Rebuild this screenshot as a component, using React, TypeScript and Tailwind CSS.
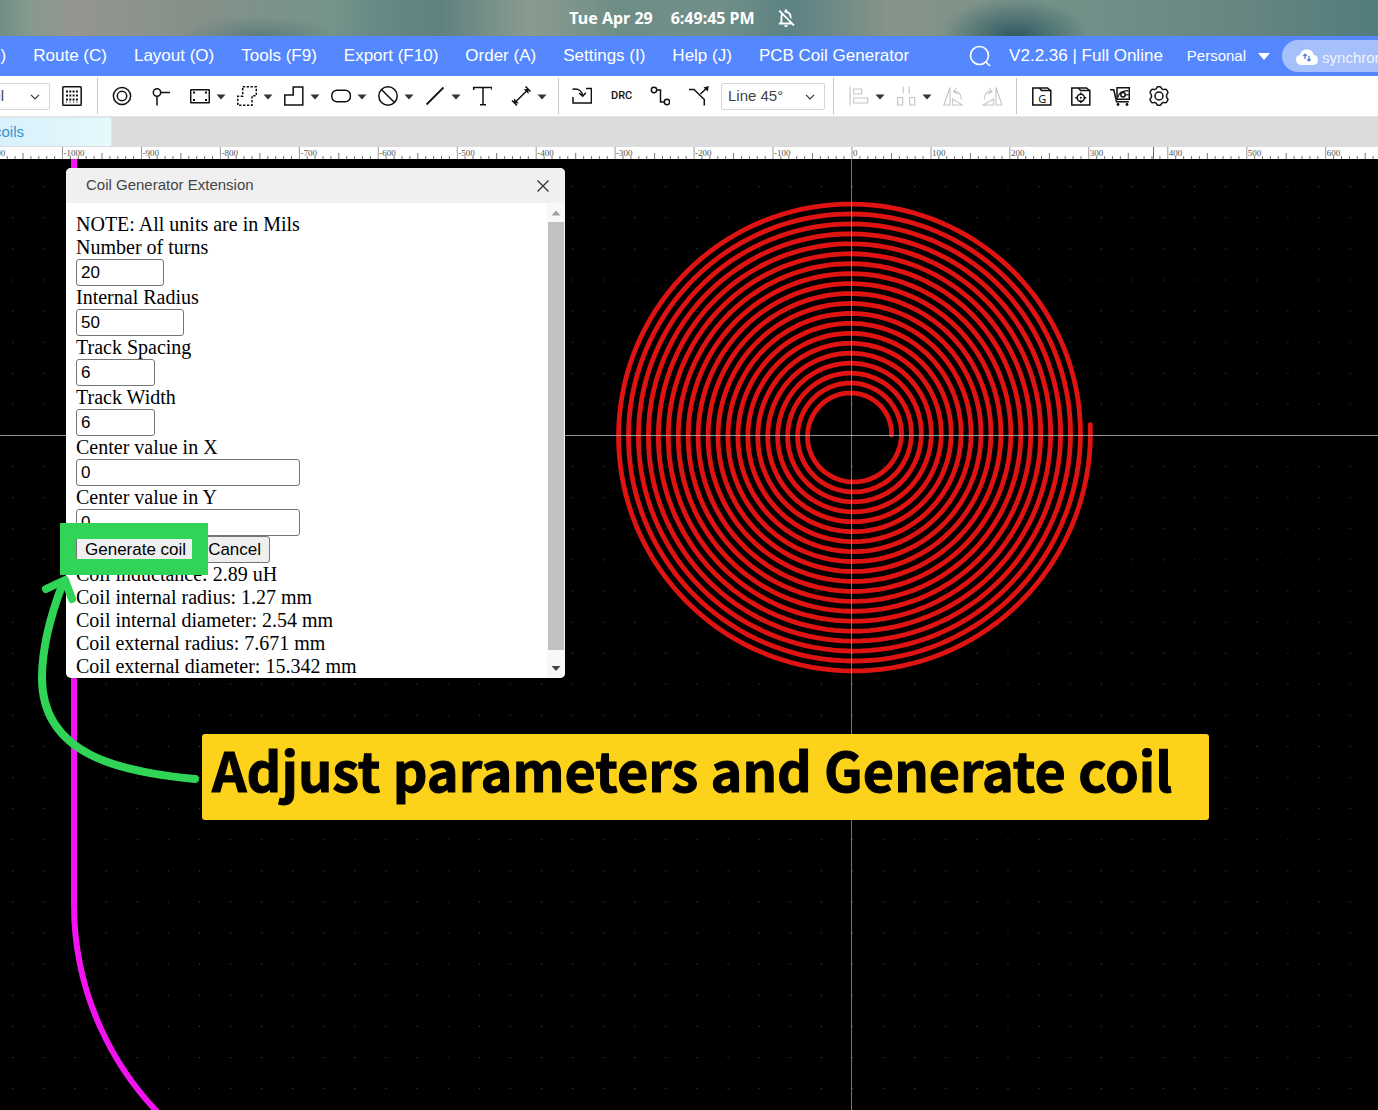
import { useState } from "react";
import type { ReactNode } from "react";
import { MdOutlineNotificationsOff } from "react-icons/md";

const MENUS = [
  "Design (D)",
  "Route (C)",
  "Layout (O)",
  "Tools (F9)",
  "Export (F10)",
  "Order (A)",
  "Settings (I)",
  "Help (J)",
  "PCB Coil Generator",
];

// canvas scale
const PX_PER_MIL = 0.7895;
const ORIGIN_X = 852;
const ORIGIN_Y = 276;
const GRID = 31.1;

const FIELDS = [
  { id: "turns", label: "Number of turns", value: "20", width: "w-[88px]" },
  { id: "radius", label: "Internal Radius", value: "50", width: "w-[108px]" },
  { id: "spacing", label: "Track Spacing", value: "6", width: "w-[79px]" },
  { id: "width", label: "Track Width", value: "6", width: "w-[79px]" },
  { id: "cx", label: "Center value in X", value: "0", width: "w-56" },
  { id: "cy", label: "Center value in Y", value: "0", width: "w-56" },
];

const RESULTS = [
  "Coil inductance: 2.89 uH",
  "Coil internal radius: 1.27 mm",
  "Coil internal diameter: 2.54 mm",
  "Coil external radius: 7.671 mm",
  "Coil external diameter: 15.342 mm",
];

// spiral track as a polyline, counter-clockwise from the inner radius
function coilPath(turns: number, innerMil: number, pitchMil: number) {
  const steps = 144;
  const total = turns * steps + 1;
  const points: string[] = [];
  for (let i = 0; i <= total; i++) {
    const angle = (i / steps) * Math.PI * 2;
    const r = (innerMil + (pitchMil * i) / steps) * PX_PER_MIL;
    points.push(
      `${(r * Math.cos(angle)).toFixed(2)},${(-r * Math.sin(angle)).toFixed(2)}`
    );
  }
  return `M${points.join("L")}`;
}

const COIL = coilPath(20, 50, 12.6);

function Icon({ children }: { children: ReactNode }) {
  return (
    <svg
      width="20"
      height="20"
      viewBox="0 0 20 20"
      fill="none"
      stroke="currentColor"
      strokeWidth="1.5"
      className="shrink-0"
    >
      {children}
    </svg>
  );
}

function Tool({
  name,
  caret,
  disabled,
  children,
}: {
  name: string;
  caret?: boolean;
  disabled?: boolean;
  children: ReactNode;
}) {
  return (
    <button
      type="button"
      aria-label={name}
      className={`flex h-8 shrink-0 items-center ${caret ? "w-[47px] gap-1.5" : "w-[39px]"}`}
    >
      <span className={disabled ? "text-[#c4c4c4]" : "text-[#111]"}>
        <Icon>{children}</Icon>
      </span>
      {caret && (
        <svg width="10" height="6" viewBox="0 0 10 6" className="mt-0.5 shrink-0">
          <path d="M0.5 0.5h9L5 5.5z" fill="#333" />
        </svg>
      )}
    </button>
  );
}

function Separator() {
  return <div className="h-9 w-px shrink-0 bg-[#c4c4c4]" />;
}

function Dropdown({
  label,
  value,
  className,
}: {
  label: string;
  value: string;
  className: string;
}) {
  return (
    <div className={`relative shrink-0 ${className}`}>
      <select
        aria-label={label}
        className="block h-[27px] w-full appearance-none rounded-xs border border-[#d6d6d6] bg-white pl-1.5 text-[15px] text-[#444]"
      >
        <option>{value}</option>
      </select>
      <svg
        width="10"
        height="6"
        viewBox="0 0 10 6"
        fill="none"
        stroke="#333"
        strokeWidth="1.2"
        className="pointer-events-none absolute right-2.5 top-[11px]"
      >
        <path d="M1 0.8l4 4 4-4" />
      </svg>
    </div>
  );
}

function StatusBar() {
  return (
    <div className="flex h-9 shrink-0 items-center justify-center bg-[radial-gradient(ellipse_75px_38px_at_1015px_36px,#2f5b62,transparent),radial-gradient(ellipse_80px_20px_at_260px_36px,#5f7d7e,transparent),linear-gradient(90deg,#6f8f88_0px,#87998d_30px,#959690_75px,#849089_200px,#76958a_330px,#668a86_375px,#5f8180_440px,#8b9b90_530px,#6d8e86_620px,#718f88_720px,#5c8284_790px,#879489_890px,#6f9088_1100px,#678681_1240px,#527c7d_1378px)] pr-3 font-['Noto_Sans',sans-serif] text-base font-bold text-white">
      <span>Tue Apr 29</span>
      <span className="ml-[18px]">6:49:45 PM</span>
      <MdOutlineNotificationsOff size={22} className="ml-5" />
    </div>
  );
}

function MenuBar() {
  return (
    <nav className="flex h-10 shrink-0 items-center overflow-hidden bg-[#5588ff] text-[17px] text-white">
      <div className="-ml-[75px] flex shrink-0 gap-[27px] whitespace-nowrap">
        {MENUS.map((menu) => (
          <button key={menu} type="button">
            {menu}
          </button>
        ))}
      </div>
      <button type="button" aria-label="Search" className="ml-[60px] shrink-0">
        <svg width="22" height="22" viewBox="0 0 22 22" fill="none" stroke="#fff" strokeWidth="1.6">
          <circle cx="10.5" cy="10.5" r="9" />
          <path d="M17 17l4 4" />
        </svg>
      </button>
      <span className="ml-[18px] shrink-0 whitespace-nowrap">V2.2.36 | Full Online</span>
      <button type="button" className="ml-6 flex shrink-0 items-center gap-3 text-[15px]">
        Personal
        <svg width="12" height="7" viewBox="0 0 12 7">
          <path d="M0 0h12L6 7z" fill="#fff" />
        </svg>
      </button>
      <button
        type="button"
        className="ml-3 flex h-8 shrink-0 items-center rounded-full bg-[#a6c0fb] px-3.5 text-[15px] text-[#f1f5ff]"
      >
        <svg width="22" height="17" viewBox="0 0 22 17" className="mr-1">
          <path
            d="M5.5 17a5.2 5.2 0 0 1-1.6-10.2A7.2 7.2 0 0 1 17.8 6.9 5.1 5.1 0 0 1 16.8 17z"
            fill="#fff"
          />
          <path
            d="M9 11V6.2M7.3 8L9 6.2 10.7 8M13 8v5M11.3 11.3L13 13l1.7-1.7"
            fill="none"
            stroke="#5580dd"
            strokeWidth="1.3"
          />
        </svg>
        <span className="pt-1">synchronized</span>
      </button>
    </nav>
  );
}

function Toolbar() {
  return (
    <div className="flex h-[41px] shrink-0 items-center overflow-hidden border-b border-[#e6e6e6] bg-white">
      <Dropdown label="Unit" value="mil" className="-ml-[22px] w-[72px]" />
      <button type="button" aria-label="Grid" className="ml-3 shrink-0 text-[#111]">
        <Icon>
          <rect x="0.8" y="0.8" width="18.4" height="18.4" rx="0.8" />
          <path
            d="M4 5.5h12M4 9.5h12M4 13.5h12"
            strokeDasharray="2 1.3"
            strokeWidth="1.8"
          />
          <path d="M4 16h12" strokeDasharray="1 2.5" strokeWidth="1" />
        </Icon>
      </button>
      <div className="w-[15px] shrink-0" />
      <Separator />

      <div className="ml-3.5 flex shrink-0">
        <Tool name="Pad">
          <circle cx="10" cy="10" r="8.6" />
          <circle cx="10" cy="10" r="4.7" />
        </Tool>
        <Tool name="Via">
          <circle cx="6" cy="6.5" r="3.7" />
          <path d="M9.7 6.5H19M6 10.2V19.5" />
        </Tool>
        <Tool name="Board outline" caret>
          <rect x="0.7" y="3.7" width="18.6" height="13" rx="0.5" />
          <path d="M3 6.5h2M15 6.5h2M3 14h2M15 14h2" strokeWidth="2" />
        </Tool>
        <Tool name="Region" caret>
          <path
            d="M5.7 0.8H19.3V9.8H15V19.2H0.8V10.2H5.7Z"
            strokeDasharray="2.4 1.5"
          />
        </Tool>
        <Tool name="Fill" caret>
          <path d="M9.2 1H18.8V19H0.8V9H9.2Z" />
        </Tool>
        <Tool name="Slot" caret>
          <rect x="0.8" y="4.3" width="18.6" height="11.4" rx="5.2" />
        </Tool>
        <Tool name="Keepout" caret>
          <circle cx="10" cy="10" r="9.2" />
          <path d="M3.5 3.5l13 13" />
        </Tool>
        <Tool name="Line" caret>
          <path d="M1.5 18.5L18.5 1.5" strokeWidth="1.8" />
        </Tool>
        <Tool name="Text">
          <path d="M1.7 4V1.5H20V4M11 1.5V18.8M8 18.8h6" />
        </Tool>
        <Tool name="Dimension" caret>
          <path d="M3 17.5L17.5 3M1 14.5l5 5M14.5 0.5l5 5" />
          <path d="M3 17.5v-5l4.8 4.8zM17.5 3v5l-4.8-4.8z" fill="currentColor" stroke="none" />
        </Tool>
      </div>
      <Separator />

      <div className="ml-[13px] flex shrink-0">
        <Tool name="Import changes">
          <path d="M14 2.5H20.2M19.4 2.5V17H1V11" />
          <path d="M0.5 3.2C6 2.5 10 5 10.8 9.5M7.2 7.2l3.6 3 3-3.5" />
        </Tool>
        <button
          type="button"
          className="h-8 w-[39px] shrink-0 text-left font-['Liberation_Sans_Narrow','Roboto',sans-serif] text-[11px] font-medium text-[#111]"
        >
          DRC
        </button>
        <Tool name="Route track">
          <circle cx="4" cy="4" r="2.7" />
          <circle cx="17" cy="16" r="2.7" />
          <path d="M6.7 4H10.5V16H14.3" />
        </Tool>
        <Tool name="Stretch track">
          <path d="M0 3.5H5L15.3 13.5V19.5M11.5 8L18 1.8" />
          <path d="M19.8 0l-1 5.4-4.3-4z" fill="currentColor" stroke="none" />
        </Tool>
      </div>
      <Dropdown label="Routing corner" value="Line 45°" className="-ml-[7px] w-[104px]" />
      <div className="w-2 shrink-0" />
      <Separator />

      <div className="ml-[15px] flex shrink-0">
        <Tool name="Align" caret disabled>
          <path d="M1 0.5v19M4.7 3h8v5h-8zM4.7 12h14v5h-14z" strokeWidth="1.1" />
        </Tool>
        <Tool name="Distribute" caret disabled>
          <path
            d="M7.2 0.5v7M13.3 0.5v7M1.7 11.5h5v7.5h-5zM13.7 11.5h5v7.5h-5z"
            strokeWidth="1.1"
          />
        </Tool>
        <Tool name="Flip horizontally" disabled>
          <path
            d="M7 1.5V19H0.8ZM9.5 13L19.5 19H9.5ZM11 5.5C15 4.5 18.5 8 18 13.5M13.5 2l-3 3.5 4 2.5"
            strokeWidth="1.1"
          />
        </Tool>
        <Tool name="Flip vertically" disabled>
          <path
            d="M14 1.5V19H20ZM11.5 13L1 19H11.5ZM9.5 5.5C5.5 4.5 2 8 2.5 13.5M7 2l3 3.5-4 2.5"
            strokeWidth="1.1"
          />
        </Tool>
      </div>
      <div className="-ml-[5px] shrink-0">
        <Separator />
      </div>

      <div className="ml-[15px] flex shrink-0">
        <Tool name="Export Gerber">
          <path d="M0.8 19V2H7.5L9.5 4.5H18.8V19Z" />
          <path d="M7.5 2H15.5L18.5 4.5" />
          <text
            x="6.2"
            y="16.6"
            fontSize="11"
            fontFamily="Noto Sans, sans-serif"
            fill="currentColor"
            stroke="none"
          >
            G
          </text>
        </Tool>
        <Tool name="Export pick and place">
          <path d="M0.8 19V2H7.5L9.5 4.5H18.8V19Z" />
          <path d="M7.5 2H15.5L18.5 4.5" />
          <circle cx="9.8" cy="11.8" r="3.6" />
          <path d="M9.8 6.5v2.5M9.8 14.6v2.5M4.3 11.8h2.5M12.8 11.8h2.5" />
          <circle cx="9.8" cy="11.8" r="1" fill="currentColor" stroke="none" />
        </Tool>
        <Tool name="Order PCB">
          <path d="M0 3.8H3.8L6.5 15.8H18.8" />
          <path d="M7 13.2V1.8H19.3V13.2H7" />
          <path d="M8 11.5C8.5 7 11.5 4.6 18.5 4.6" strokeWidth="1.2" />
          <circle cx="13" cy="8.8" r="2.2" />
          <path d="M15.2 8.8h3.6" strokeWidth="1.2" />
          <circle cx="8" cy="18.5" r="1.4" fill="currentColor" stroke="none" />
          <circle cx="17" cy="18.5" r="1.4" fill="currentColor" stroke="none" />
        </Tool>
        <Tool name="Settings">
          <circle cx="10" cy="10" r="4" />
          <path
            strokeLinejoin="round"
            d="M7.3 2.7Q8 0.7 9 0.7H11Q12 0.7 12.7 2.7Q14 3.9 15.6 3.4Q17 3 17.6 3.9L18.8 6Q19.3 6.9 18 8Q17 10 18 12Q19.3 13.1 18.8 14L17.6 16.1Q17 17 15.6 16.6Q14 16.1 12.7 17.3Q12 19.3 11 19.3H9Q8 19.3 7.3 17.3Q6 16.1 4.4 16.6Q3 17 2.4 16.1L1.2 14Q0.7 13.1 2 12Q3 10 2 8Q0.7 6.9 1.2 6L2.4 3.9Q3 3 4.4 3.4Q6 3.9 7.3 2.7Z"
          />
        </Tool>
      </div>
    </div>
  );
}

function TabBar() {
  return (
    <div className="flex h-[30px] shrink-0 bg-[#dcdcdc]">
      <button
        type="button"
        className="mb-px flex w-[112px] items-center border-r border-t border-[#d2e8ee] bg-linear-to-r from-[#d8f1fb] to-[#e6f9fc] text-[15px] text-[#3492d4]"
      >
        <span className="-ml-1.5">coils</span>
      </button>
    </div>
  );
}

function Ruler() {
  const ticks = [];
  for (let mil = -1080; mil <= 700; mil += 10) {
    const x = ORIGIN_X + mil * PX_PER_MIL;
    const height = mil % 100 === 0 ? 12 : mil % 50 === 0 ? 6 : 3;
    ticks.push(
      <path
        key={mil}
        d={`M${x.toFixed(1)} 12v${-height}`}
        stroke={mil % 100 === 0 ? "#999" : "#777"}
      />
    );
  }
  const labels = [];
  for (let mil = -1100; mil <= 700; mil += 100) {
    labels.push(
      <text key={mil} x={(ORIGIN_X + 1 + mil * PX_PER_MIL).toFixed(1)} y="9">
        {mil}
      </text>
    );
  }
  return (
    <div className="h-3 shrink-0 overflow-hidden bg-white">
      <svg className="h-3 w-full">
        {ticks}
        {/* pointer position */}
        <path d="M1153.5 0v12" stroke="#666" />
        <g fill="#555" fontSize="9" fontFamily="Liberation Serif, serif">
          {labels}
        </g>
      </svg>
    </div>
  );
}

function Board() {
  return (
    <svg className="absolute inset-0 h-full w-full">
      <defs>
        <pattern
          id="grid-dots"
          x={ORIGIN_X}
          y={ORIGIN_Y}
          width={GRID}
          height={GRID}
          patternUnits="userSpaceOnUse"
        >
          <rect width="1" height="1" fill="#4a4a4a" />
        </pattern>
      </defs>
      <rect width="100%" height="100%" fill="url(#grid-dots)" />
      {/* board outline */}
      <path
        d="M74 0V746A300 300 0 0 0 174 969"
        fill="none"
        stroke="#f312f0"
        strokeWidth="6"
      />
      <path
        d={COIL}
        transform={`translate(${ORIGIN_X} ${ORIGIN_Y})`}
        fill="none"
        stroke="#e01313"
        strokeWidth="4.8"
        strokeLinecap="round"
      />
      <rect x={ORIGIN_X - 1} width="1" height="100%" fill="#b4b4b4" fillOpacity="0.65" />
      <rect y={ORIGIN_Y} width="100%" height="1" fill="#b4b4b4" fillOpacity="0.8" />
    </svg>
  );
}

function CoilDialog() {
  const [values, setValues] = useState<Record<string, string>>(
    Object.fromEntries(FIELDS.map((f) => [f.id, f.value]))
  );

  return (
    <section
      aria-label="Coil Generator Extension"
      className="absolute left-[66px] top-[9px] w-[499px] overflow-hidden rounded-[5px] bg-white"
    >
      <header className="flex h-[35px] items-center justify-between bg-[#f0f0f0] pl-5 pr-4 text-[15px] text-[#444]">
        <h2>Coil Generator Extension</h2>
        <button type="button" aria-label="Close">
          <svg width="12" height="12" viewBox="0 0 12 12" stroke="#333" strokeWidth="1.3">
            <path d="M0.5 0.5l11 11M11.5 0.5l-11 11" />
          </svg>
        </button>
      </header>

      <div className="flex">
        <form
          onSubmit={(e) => e.preventDefault()}
          className="flex-1 pl-2.5 pt-2.5 font-['Liberation_Serif',serif] text-[20px] leading-[23px] text-black"
        >
          <p>NOTE: All units are in Mils</p>
          {FIELDS.map((field) => (
            <div key={field.id}>
              <label htmlFor={field.id} className="block">
                {field.label}
              </label>
              <input
                id={field.id}
                type="text"
                value={values[field.id]}
                onChange={(e) =>
                  setValues({ ...values, [field.id]: e.target.value })
                }
                className={`block h-[27px] rounded-[3px] border border-[#767676] bg-white px-1 font-['Liberation_Sans',sans-serif] text-[17px] ${field.width}`}
              />
            </div>
          ))}
          <div className="flex gap-1 font-['Liberation_Sans',sans-serif] text-[17px]">
            <button
              type="submit"
              className="h-[27px] rounded-[3px] border border-[#767676] bg-[#efefef] px-2"
            >
              Generate coil
            </button>
            <button
              type="button"
              className="h-[27px] rounded-[3px] border border-[#767676] bg-[#efefef] px-2"
            >
              Cancel
            </button>
          </div>
          {RESULTS.map((line) => (
            <p key={line}>{line}</p>
          ))}
        </form>

        {/* scrollbar */}
        <div className="flex w-[18px] flex-col items-center bg-[#f8f8f8]">
          <svg width="10" height="19" viewBox="0 0 10 19">
            <path d="M0.5 12.5h9L5 7.5z" fill="#a0a0a0" />
          </svg>
          <div className="w-4 flex-1 bg-[#c1c1c1]" />
          <svg width="10" height="28" viewBox="0 0 10 28">
            <path d="M0.5 16h9L5 21z" fill="#444" />
          </svg>
        </div>
      </div>
    </section>
  );
}

function Annotations() {
  return (
    <>
      <div className="pointer-events-none absolute left-[60px] top-[364px] h-[52px] w-[148px] border-16 border-[#30d457]" />
      <svg
        width="220"
        height="240"
        viewBox="0 0 220 240"
        fill="none"
        stroke="#30d457"
        strokeWidth="8"
        strokeLinecap="round"
        strokeLinejoin="round"
        className="pointer-events-none absolute left-0 top-[410px]"
      >
        <path d="M195 210C120 203 42 186 42 109C42 76 51 45 63 14" />
        <path d="M46 20L65 11L72 30" />
      </svg>
      <p className="absolute left-[202px] top-[575px] flex h-[86px] w-[1007px] items-center whitespace-nowrap rounded-[3px] bg-[#fcd21a] pb-4 pl-2.5 font-['Noto_Sans_CJK_SC',sans-serif] text-[54px] font-bold leading-none text-black [-webkit-text-stroke:1px_black]">
        Adjust parameters and Generate coil
      </p>
    </>
  );
}

export default function App() {
  return (
    <div className="flex min-h-screen flex-col overflow-hidden bg-black font-['Liberation_Sans',sans-serif]">
      <StatusBar />
      <MenuBar />
      <Toolbar />
      <TabBar />
      <Ruler />
      <main className="relative flex-1 overflow-hidden bg-black">
        <Board />
        <CoilDialog />
        <Annotations />
      </main>
    </div>
  );
}
